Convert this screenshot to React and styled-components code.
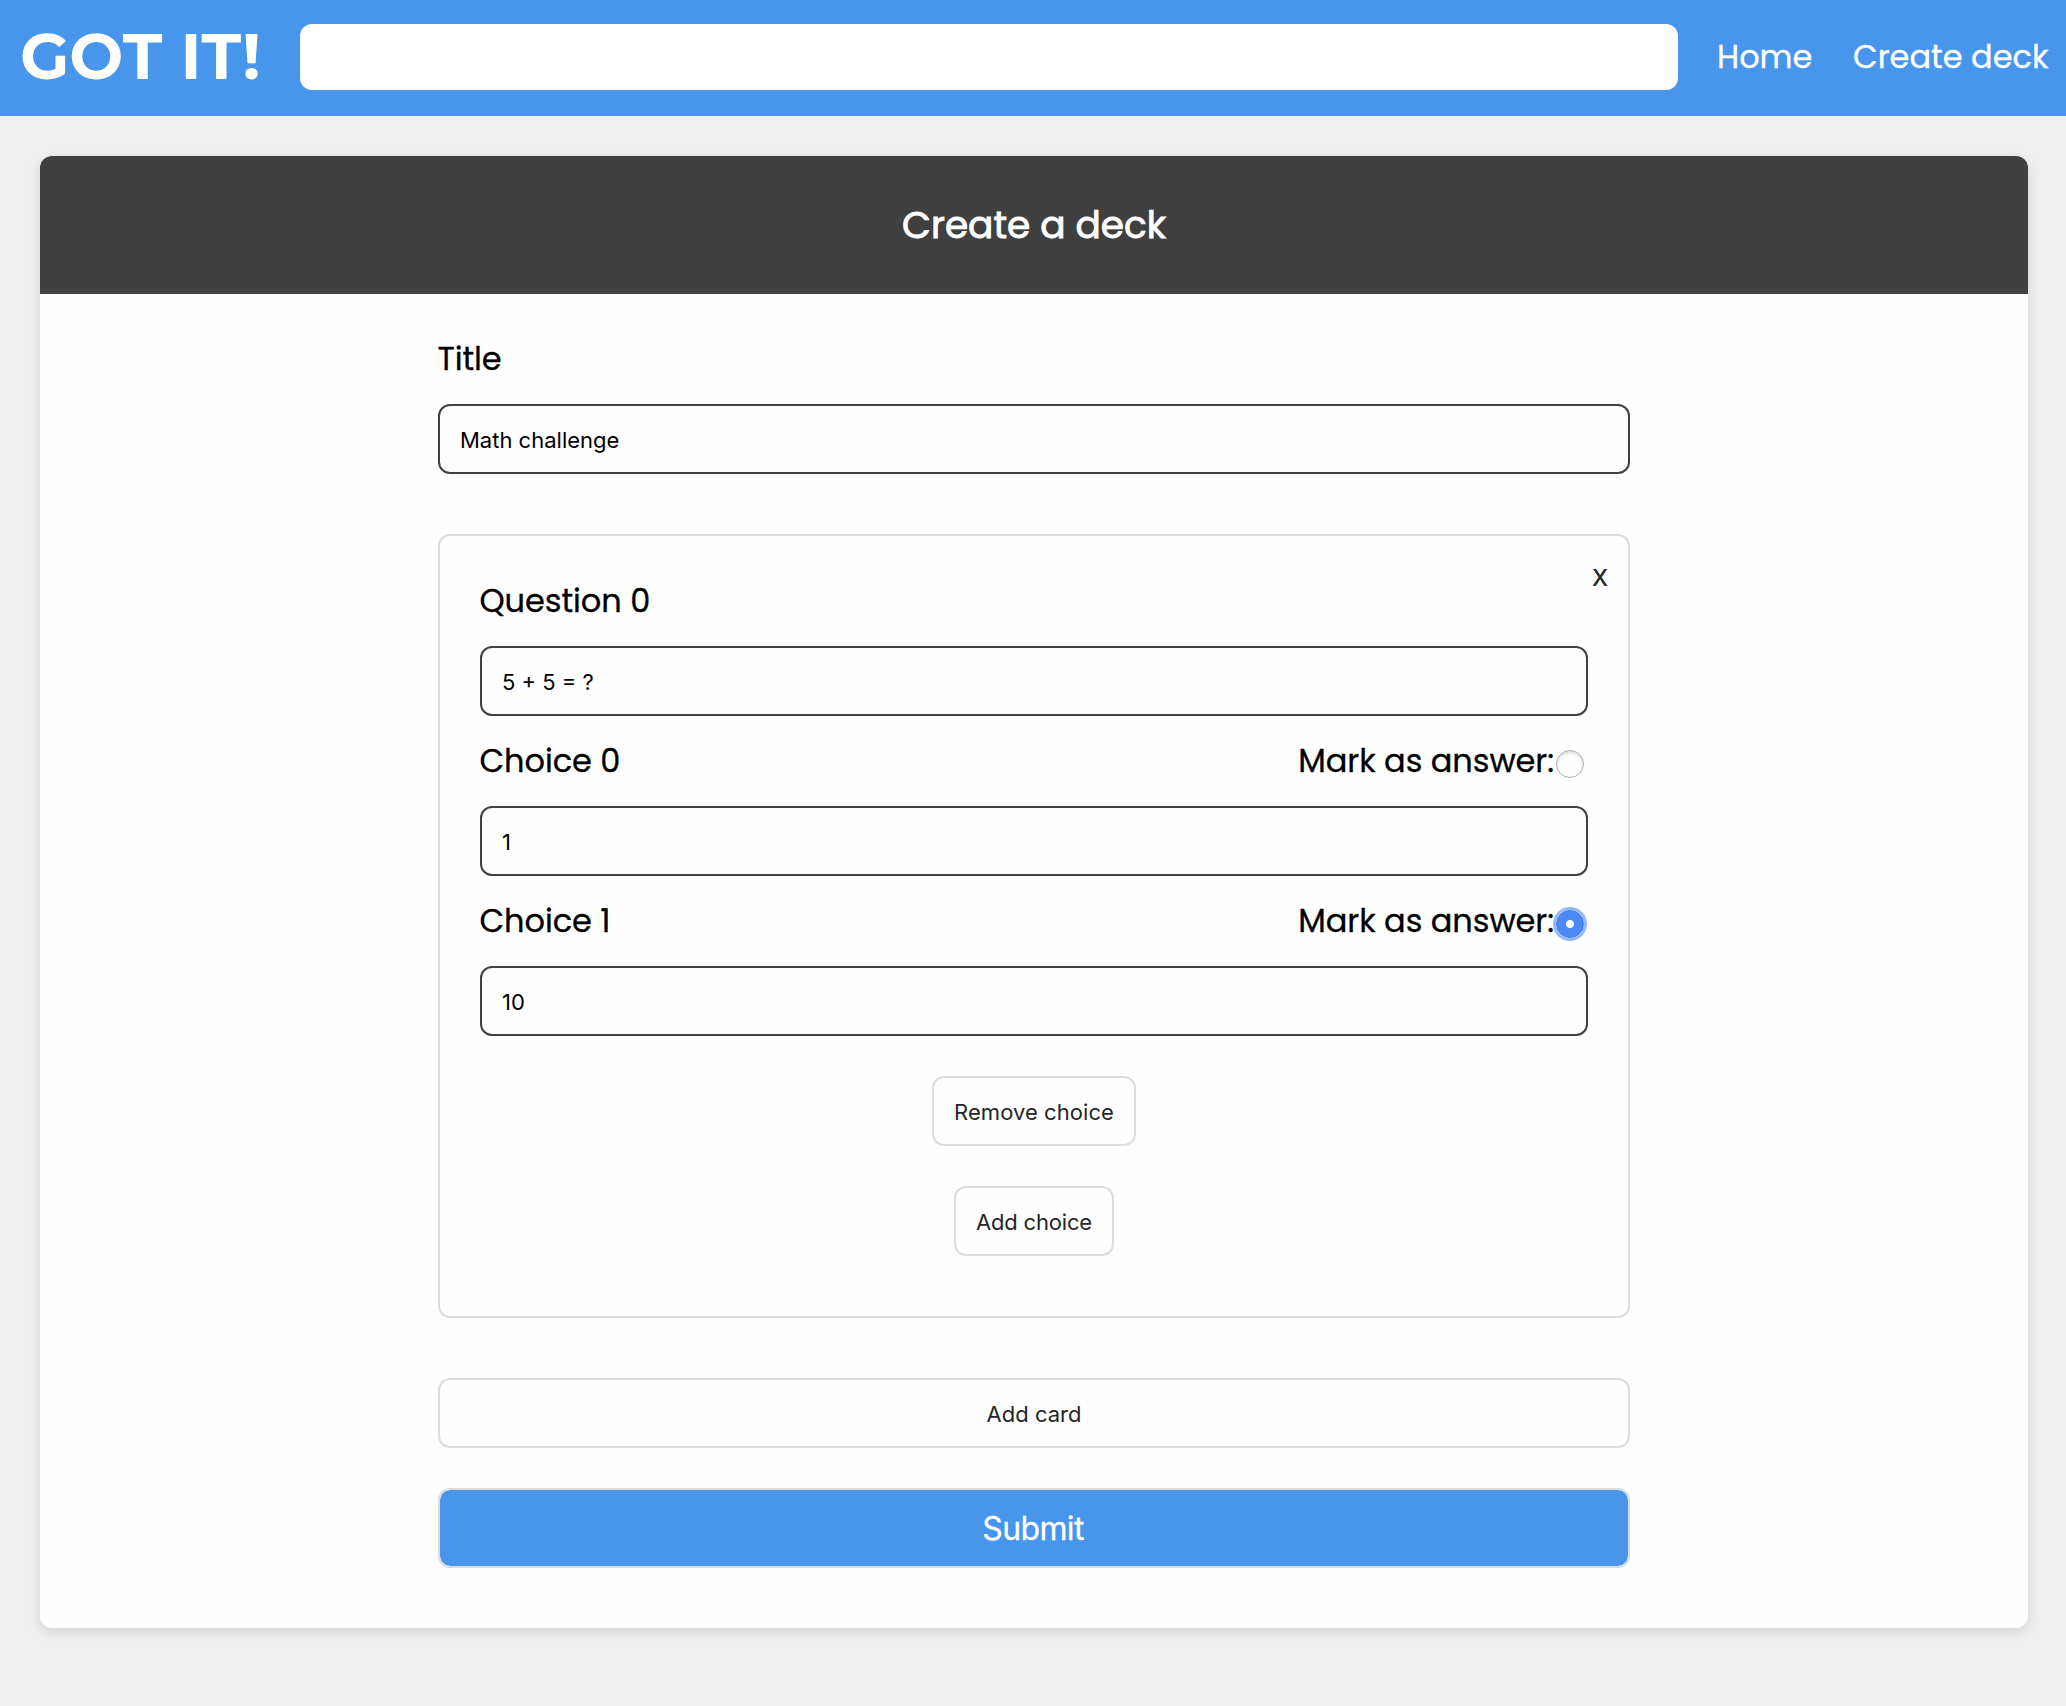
import React, { useState } from "react";
import styled, { createGlobalStyle } from "styled-components";

const GlobalStyle = createGlobalStyle`
  *, *::before, *::after { box-sizing: border-box; }
  body {
    margin: 0;
    min-height: 100vh;
    background: #efefef;
    color: #000;
    font-family: Poppins, Inter, sans-serif;
    font-size: 32px;
  }
  button, input { font-family: Inter, sans-serif; margin: 0; outline: none; }
`;

const Header = styled.header`
  display: flex;
  align-items: center;
  height: 116px;
  padding: 0 15px 2px 20px;
  background: #4895ec;
  color: #fff;
`;

const Logo = styled.div`
  width: 280px;
  flex: none;
  padding-bottom: 2px;
  font-family: Montserrat, Inter, sans-serif;
  font-size: 64px;
  font-weight: 700;
  line-height: 78px;
  white-space: nowrap;
`;

const Search = styled.input`
  flex: 1;
  min-width: 0;
  height: 66px;
  padding: 0 20px;
  border: 0;
  border-radius: 12px;
  background: #fff;
  font-size: 22px;
`;

const Nav = styled.nav`
  display: flex;
  flex: none;
  gap: 40.5px;
  width: 373px;
  padding-left: 39px;
`;

const NavLink = styled.a`
  color: #fff;
  line-height: 48px;
  white-space: nowrap;
  -webkit-text-stroke: 0.3px currentColor;
`;

const Card = styled.main`
  margin: 40px 38px 0 40px;
  border-radius: 12px;
  background: #fefefe;
  box-shadow: 0 4px 12px rgba(0, 0, 0, 0.12);
`;

const CardHeader = styled.div`
  display: flex;
  align-items: center;
  justify-content: center;
  height: 138px;
  border-radius: 12px 12px 0 0;
  background: #404040;
  color: #fff;
`;

const CardTitle = styled.h1`
  margin: 0;
  padding-bottom: 1px;
  font-size: 37.44px;
  font-weight: 400;
  line-height: 56px;
  -webkit-text-stroke: 0.9px currentColor;
`;

const Form = styled.form`
  display: flex;
  flex-direction: column;
  width: 1192px;
  margin: 0 auto;
  padding: 40px 0 60px;
`;

const LabelRow = styled.div`
  display: flex;
  align-items: center;
  justify-content: space-between;
  height: 48px;
  margin: 0 0 22px -0.6px;
`;

const Label = styled.label`
  padding-top: 1px;
  line-height: 48px;
  letter-spacing: -0.06px;
  white-space: nowrap;
  -webkit-text-stroke: 0.3px currentColor;
`;

const TextInput = styled.input`
  width: 100%;
  height: 70px;
  padding: 2px 20px 0;
  border: 2px solid #404040;
  border-radius: 12px;
  background: #fefefe;
  color: #000;
  font-size: 22px;
`;

const Question = styled.section`
  display: flex;
  flex-direction: column;
  position: relative;
  margin: 60px 0;
  padding: 40px 40px 60px;
  border: 2px solid #dcdcdc;
  border-radius: 12px;
`;

const RemoveCard = styled.button`
  position: absolute;
  top: 27px;
  right: 20px;
  padding: 0;
  border: 0;
  background: none;
  color: #262626;
  font-size: 23px;
  font-weight: 500;
  line-height: 30px;
`;

const Choice = styled.div`
  margin-top: 20px;
`;

const Answer = styled.div`
  display: flex;
  align-items: center;
`;

const Radio = styled.input`
  appearance: none;
  width: 28px;
  height: 28px;
  margin: 8px 4px 0 2px;
  border: 1px solid #b0b0b0;
  border-radius: 50%;
  background: #fefefe;
  box-shadow: inset 0 2px 3px rgba(0, 0, 0, 0.14);

  &:checked {
    border: 1px solid #3b78f0;
    background: radial-gradient(circle, #fff 0 3.6px, #4b89f6 4.4px);
    box-shadow: 0 0 0 3px #95b8f8;
  }
`;

const Button = styled.button`
  align-self: ${(p) => (p.$compact ? "center" : "stretch")};
  height: 70px;
  margin-top: ${(p) => (p.$compact ? "40px" : "0")};
  padding: 2px 20px 0;
  border: 2px solid #dcdcdc;
  border-radius: 12px;
  background: #fefefe;
  color: #262626;
  font-size: 22px;
  letter-spacing: ${(p) => p.$tracking || "0"};
`;

const Submit = styled(Button)`
  height: 80px;
  margin-top: 40px;
  padding: 1px 22px 0 20px;
  background: #4895ec;
  background-clip: padding-box;
  color: #fff;
  font-size: 32px;
  letter-spacing: -0.65px;
  -webkit-text-stroke: 0.3px currentColor;
`;

const choices = ["1", "10"];

export default function App() {
  const [answer, setAnswer] = useState(1);
  return (
    <>
      <GlobalStyle />
      <Header>
        <Logo>GOT IT!</Logo>
        <Search aria-label="Search" />
        <Nav>
          <NavLink>Home</NavLink>
          <NavLink>Create deck</NavLink>
        </Nav>
      </Header>
      <Card>
        <CardHeader>
          <CardTitle>Create a deck</CardTitle>
        </CardHeader>
        <Form onSubmit={(e) => e.preventDefault()}>
          <LabelRow>
            <Label>Title</Label>
          </LabelRow>
          <TextInput defaultValue="Math challenge" />
          <Question>
            <RemoveCard type="button">X</RemoveCard>
            <LabelRow>
              <Label>Question 0</Label>
            </LabelRow>
            <TextInput defaultValue="5 + 5 = ?" />
            {choices.map((value, i) => (
              <Choice key={i}>
                <LabelRow>
                  <Label>{`Choice ${i}`}</Label>
                  <Answer>
                    <Label>Mark as answer:</Label>
                    <Radio
                      type="radio"
                      name="answer"
                      checked={answer === i}
                      onChange={() => setAnswer(i)}
                    />
                  </Answer>
                </LabelRow>
                <TextInput defaultValue={value} />
              </Choice>
            ))}
            <Button type="button" $compact $tracking="0.06px">Remove choice</Button>
            <Button type="button" $compact $tracking="-0.18px">Add choice</Button>
          </Question>
          <Button type="button">Add card</Button>
          <Submit type="submit">Submit</Submit>
        </Form>
      </Card>
    </>
  );
}
